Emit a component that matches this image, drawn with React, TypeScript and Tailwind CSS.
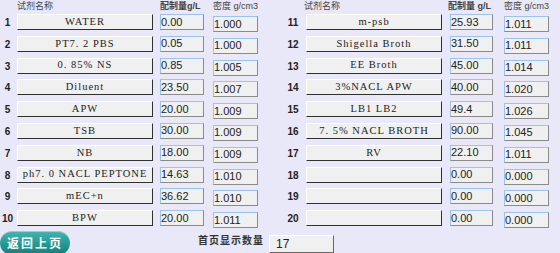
import React from 'react'

type Row = { no: number; name: string; amount: string; density: string }

const left: Row[] = [
  { no: 1, name: 'WATER', amount: '0.00', density: '1.000' },
  { no: 2, name: 'PT7. 2 PBS', amount: '0.05', density: '1.000' },
  { no: 3, name: '0. 85% NS', amount: '0.85', density: '1.005' },
  { no: 4, name: 'Diluent', amount: '23.50', density: '1.007' },
  { no: 5, name: 'APW', amount: '20.00', density: '1.009' },
  { no: 6, name: 'TSB', amount: '30.00', density: '1.009' },
  { no: 7, name: 'NB', amount: '18.00', density: '1.009' },
  { no: 8, name: 'ph7. 0 NACL PEPTONE', amount: '14.63', density: '1.010' },
  { no: 9, name: 'mEC+n', amount: '36.62', density: '1.010' },
  { no: 10, name: 'BPW', amount: '20.00', density: '1.011' },
]

const right: Row[] = [
  { no: 11, name: 'm-psb', amount: '25.93', density: '1.011' },
  { no: 12, name: 'Shigella Broth', amount: '31.50', density: '1.011' },
  { no: 13, name: 'EE Broth', amount: '45.00', density: '1.014' },
  { no: 14, name: '3%NACL APW', amount: '40.00', density: '1.020' },
  { no: 15, name: 'LB1 LB2', amount: '49.4', density: '1.026' },
  { no: 16, name: '7. 5% NACL BROTH', amount: '90.00', density: '1.045' },
  { no: 17, name: 'RV', amount: '22.10', density: '1.011' },
  { no: 18, name: '', amount: '0.00', density: '0.000' },
  { no: 19, name: '', amount: '0.00', density: '0.000' },
  { no: 20, name: '', amount: '0.00', density: '0.000' },
]

const sans = "font-['Liberation_Sans','Noto_Sans_CJK_SC',sans-serif]"

const NameButton = ({ name }: { name: string }) => (
  <div className="w-[136px] h-[16px] flex items-center justify-center bg-[#f0f0f0] border border-t-white border-l-white border-r-[#303030] border-b-[#303030] text-[10.5px] tracking-[1px] text-[#222] font-['Liberation_Serif',serif] whitespace-pre leading-none">
    {name}
  </div>
)

const ValueBox = ({ value, className }: { value: string; className: string }) => (
  <div
    className={`h-[16px] flex items-center bg-[#f0f0f0] border border-t-[#9cc4ea] border-l-[#9cc4ea] border-r-[#8a8a8a] border-b-[#8a8a8a] text-[11px] text-[#222] leading-none ${sans} ${className}`}
  >
    {value}
  </div>
)

const Column = ({ rows, isRight }: { rows: Row[]; isRight: boolean }) => (
  <div className="w-[280px] flex flex-col">
    {/* Header */}
    <div className={`h-[13px] flex items-center text-[9px] text-[#444] ${sans}`}>
      <span className={isRight ? 'ml-[24px] w-[144px]' : 'ml-[17px] w-[143px]'}>试剂名称</span>
      <span className={isRight ? 'w-[56px] font-bold' : 'w-[53px] font-bold'}>
        {isRight ? '配制量 g/L' : '配制量g/L'}
      </span>
      <span>密度 g/cm3</span>
    </div>

    {/* Rows */}
    <div className="flex flex-col gap-[5.8px] mt-[1px]">
      {rows.map((r) => (
        <div key={r.no} className="flex items-start h-[16px]">
          <span
            className={`${isRight ? 'w-[26px]' : 'w-[15px]'} text-center text-[10px] font-bold text-[#222] mt-[4px] leading-none ${sans}`}
          >
            {r.no}
          </span>
          <div className={isRight ? '' : 'ml-[2px]'}>
            <NameButton name={r.name} />
          </div>
          <ValueBox value={r.amount} className={isRight ? 'ml-[8px] w-[43px]' : 'ml-[7px] w-[44px]'} />
          <ValueBox value={r.density} className={isRight ? 'ml-[11px] w-[45px] mt-[2px]' : 'ml-[9px] w-[45px] mt-[2px]'} />
        </div>
      ))}
    </div>
  </div>
)

export default function App() {
  return (
    <div className="w-[560px] h-[253px] overflow-hidden bg-[#e8e8f8] flex flex-col">
      <div className="h-[2px] bg-[#9a9aa6]" />
      <div className="flex">
        <Column rows={left} isRight={false} />
        <Column rows={right} isRight={true} />
      </div>

      {/* Footer */}
      <div className="flex items-start mt-[5px]">
        <button className="w-[70px] h-[24px] rounded-full bg-gradient-to-b from-[#3db8b0] to-[#0f7f7c] text-white text-[12px] font-bold tracking-[2px] font-['Noto_Sans_CJK_SC',sans-serif] leading-none flex items-center justify-center shadow-[inset_0_1px_0_rgba(255,255,255,0.4)]">
          返回上页
        </button>
        <span className={`ml-[128px] mt-[5px] text-[10px] font-bold text-[#333] tracking-[1px] leading-none ${sans}`}>
          首页显示数量
        </span>
        <div className={`ml-[5px] mt-[4px] w-[65px] h-[18px] flex items-center pl-[6px] bg-[#f0f0f0] border border-t-white border-l-white border-r-[#666] border-b-[#666] text-[12px] text-[#222] leading-none ${sans}`}>
          17
        </div>
      </div>
    </div>
  )
}
